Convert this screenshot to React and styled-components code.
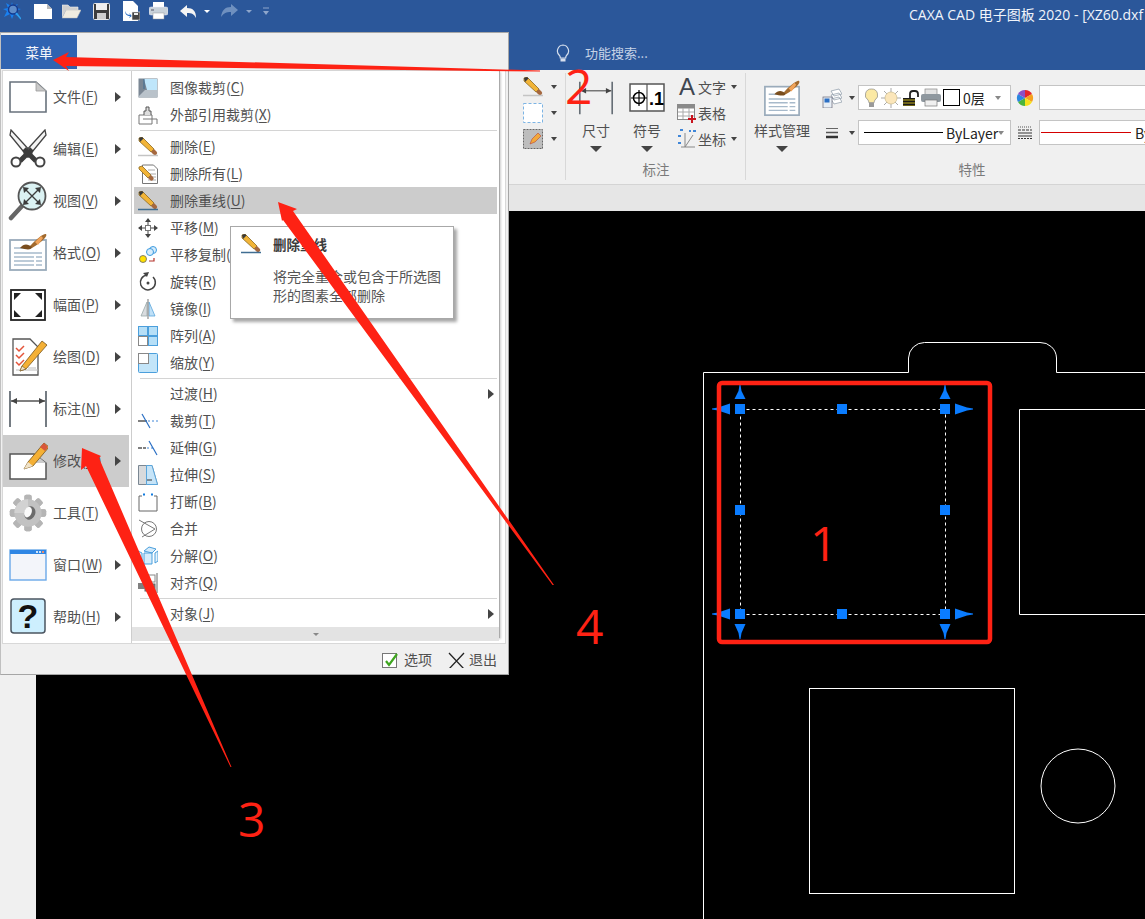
import styled, { createGlobalStyle } from "styled-components";

const GlobalStyle = createGlobalStyle`
  html, body {
    margin: 0;
    padding: 0;
    background: #000;
    overflow: hidden;
  }
  * {
    box-sizing: border-box;
  }
`;

const CJK = `"Noto Sans CJK SC", "Noto Sans", sans-serif`;
const RED = "#fe2214";
const GRIP = "#0a7cff";

const Page = styled.div`
  position: relative;
  width: 1145px;
  height: 919px;
  overflow: hidden;
  display: flex;
  flex-direction: column;
  font-family: ${CJK};
  font-size: 14px;
  color: #505050;
`;

/* ---------- title bar ---------- */
const TitleBar = styled.header`
  height: 70px;
  flex: none;
  background: #2b579a;
  display: flex;
  flex-direction: column;
`;

const TitleRow = styled.div`
  height: 28px;
  display: flex;
  align-items: center;
  white-space: nowrap;
  overflow: hidden;
`;

const QuickBar = styled.div`
  flex: 0 0 909px;
  display: flex;
  align-items: center;
  padding-bottom: 6px;
`;

const QuickSlot = styled.span`
  display: flex;
  margin-left: ${(p) => p.$left}px;
`;

const WindowTitle = styled.span`
  flex: none;
  color: #f0f4fa;
  font-size: 14px;
  font-family: "Open Sans", ${CJK};
`;

const SearchRow = styled.div`
  flex: 1;
  display: flex;
  align-items: flex-end;
  gap: 15px;
  padding: 0 0 8px 556px;
  color: #c6d3e6;
  font-size: 13px;
  line-height: 18px;
`;

/* ---------- ribbon ---------- */
const Ribbon = styled.section`
  height: 115px;
  flex: none;
  display: flex;
  padding-left: 509px;
  background: #f0f0f0;
  border-bottom: 1px solid #d4d4d4;
  overflow: hidden;
`;

const Group = styled.div`
  flex: 0 0 ${(p) => p.$width}px;
  position: relative;
  display: flex;
  flex-direction: column;
  padding-top: 10px;
  &::after {
    content: "";
    position: absolute;
    right: 0;
    top: 3px;
    bottom: 4px;
    width: 1px;
    background: #d8d8d8;
  }
`;

const GroupBody = styled.div`
  height: 77px;
  display: flex;
`;

const GroupLabel = styled.div`
  height: 24px;
  line-height: 24px;
  text-align: center;
  color: #7a7a7a;
  font-size: 13.5px;
`;

const BigButton = styled.div`
  flex: 0 0 ${(p) => p.$width}px;
  display: flex;
  flex-direction: column;
  align-items: center;
  white-space: nowrap;
`;

const BigIcon = styled.div`
  height: 42px;
  display: flex;
  align-items: flex-start;
`;

const BigLabel = styled.div`
  height: 18px;
  line-height: 16px;
`;

const Caret = styled.span`
  flex: none;
  display: block;
  width: 0;
  height: 0;
  margin: ${(p) => p.$margin || "0"};
  border-left: ${(p) => p.$size}px solid transparent;
  border-right: ${(p) => p.$size}px solid transparent;
  border-top: ${(p) => Math.ceil(p.$size * 0.9)}px solid ${(p) => p.$color || "#444"};
`;

const SmallColumn = styled.div`
  display: flex;
  flex-direction: column;
  margin: -5px 0 0 ${(p) => p.$left}px;
`;

const SmallRow = styled.div`
  height: 26px;
  display: flex;
  align-items: center;
  white-space: nowrap;
  padding-bottom: 2px;
`;

const SmallIcon = styled.span`
  flex: 0 0 ${(p) => p.$width}px;
  display: flex;
  justify-content: center;
  align-items: center;
`;

const BigLetter = styled.span`
  font-family: "Liberation Sans", sans-serif;
  font-size: 24px;
  line-height: 24px;
  color: #3f4650;
`;

const PropColumns = styled.div`
  display: flex;
  flex-direction: column;
  gap: 10px;
  margin: 5px 0 0 0;
`;

const PropRow = styled.div`
  height: 25px;
  display: flex;
  align-items: center;
`;

const ComboBox = styled.div`
  flex: 0 0 ${(p) => p.$width}px;
  height: 25px;
  display: flex;
  align-items: center;
  gap: ${(p) => p.$gap || 0}px;
  padding: 0 5px 0 ${(p) => (p.$tight ? 1 : 5)}px;
  background: #fff;
  border: 1px solid #c4c4c4;
  color: #222;
  white-space: nowrap;
  overflow: hidden;
`;

const ComboLine = styled.span`
  flex: 0 0 ${(p) => p.$width}px;
  height: 1px;
  background: ${(p) => p.$color};
`;

const ComboText = styled.span`
  margin-left: ${(p) => p.$left}px;
  font-size: 14px;
  line-height: 18px;
`;

/* ---------- work area ---------- */
const GreyStrip = styled.div`
  height: 26px;
  flex: none;
  background: #e6e6e6;
`;

const WorkArea = styled.main`
  flex: 1;
  display: flex;
  min-height: 0;
`;

const LeftStrip = styled.div`
  flex: 0 0 36px;
  background: #f0f0f0;
`;

const Canvas = styled.div`
  flex: 1;
  background: #000;
`;

const CanvasSvg = styled.svg`
  display: block;
  width: 100%;
  height: 100%;
`;

/* ---------- application menu ---------- */
const Menu = styled.nav`
  position: absolute;
  left: 0;
  top: 32px;
  width: 509px;
  height: 643px;
  z-index: 10;
  display: flex;
  flex-direction: column;
  background: #f0f0f0;
  border: 1px solid #a6a6a6;
  border-left-color: #c0c0c0;
`;

const MenuHeader = styled.div`
  height: 37px;
  flex: none;
  padding-top: 2px;
`;

const MenuTab = styled.div`
  width: 76px;
  height: 34px;
  display: flex;
  align-items: center;
  justify-content: center;
  background: #3063b1;
  color: #f4f6fb;
  font-size: 13.5px;
`;

const MenuPanel = styled.div`
  height: 574px;
  margin: 0 2px 0 1px;
  display: flex;
  background: #fff;
  border: 1px solid #d8d8d8;
`;

const PrimaryList = styled.ul`
  flex: 0 0 129px;
  margin: 0;
  padding: 0 2px 0 0;
  list-style: none;
  border-right: 1px solid #d0d0d0;
`;

const PrimaryRow = styled.li`
  height: 52px;
  display: flex;
  align-items: center;
  background: ${(p) => (p.$active ? "#cccccc" : "transparent")};
`;

const PrimaryIcon = styled.span`
  flex: 0 0 50px;
  padding-left: 5px;
  display: flex;
`;

const RowLabel = styled.span`
  flex: 1;
  white-space: nowrap;
  line-height: 20px;
  padding-bottom: 2px;
  u {
    text-underline-offset: 2px;
  }
`;

const SubMenuArrow = styled.span`
  flex: none;
  width: 0;
  height: 0;
  margin-right: ${(p) => p.$right}px;
  border-top: 5px solid transparent;
  border-bottom: 5px solid transparent;
  border-left: 6px solid #444;
`;

const SecondaryPane = styled.div`
  flex: 0 0 368px;
  height: 567px;
  position: relative;
  display: flex;
  flex-direction: column;
  border-right: 1px solid #aaa;
  border-bottom: 1px solid #aaa;
  box-shadow: 1px 1px 2px rgba(0, 0, 0, 0.2);
`;

const SecondaryList = styled.ul`
  flex: 1;
  margin: 0;
  padding: 3px 2px 0;
  list-style: none;
`;

const SecondaryRow = styled.li`
  height: 27px;
  display: flex;
  align-items: center;
  background: ${(p) => (p.$active ? "#cccccc" : "transparent")};
`;

const SecondaryIcon = styled.span`
  flex: 0 0 36px;
  padding-left: 4px;
  display: flex;
`;

const Separator = styled.li`
  height: 1px;
  margin: 2px 0 ${(p) => p.$after}px 6px;
  background: #d4d4d4;
`;

const ScrollFoot = styled.div`
  height: 14px;
  flex: none;
  display: flex;
  align-items: center;
  justify-content: center;
  background: #e3e3e3;
`;

const MenuFooter = styled.div`
  flex: 1;
  display: flex;
  align-items: center;
  justify-content: flex-end;
  gap: 16px;
  padding-right: 11px;
`;

const FooterButton = styled.span`
  display: flex;
  align-items: center;
  gap: 4px;
  font-size: 14px;
`;

const Tooltip = styled.aside`
  position: absolute;
  left: 98px;
  top: 155px;
  width: 224px;
  height: 93px;
  padding: 6px 10px 0 10px;
  background: #fff;
  border: 1px solid #a8a8a8;
  box-shadow: 3px 3px 3px rgba(0, 0, 0, 0.35);
  z-index: 2;
`;

const TipTitle = styled.div`
  display: flex;
  align-items: center;
  gap: 12px;
  height: 22px;
  font-weight: 700;
  font-size: 13.5px;
  color: #3c3c3c;
`;

const TipBody = styled.p`
  margin: 12px 0 0 32px;
  font-size: 14px;
  line-height: 19px;
  color: #555;
`;

/* ---------- red annotations ---------- */
const Annotations = styled.svg`
  position: absolute;
  left: 0;
  top: 0;
  width: 1145px;
  height: 919px;
  z-index: 20;
  pointer-events: none;
`;

const Number = styled.span`
  position: absolute;
  left: ${(p) => p.$x}px;
  top: ${(p) => p.$y}px;
  z-index: 21;
  color: ${RED};
  font-family: "Open Sans", sans-serif;
  font-weight: 400;
  font-size: 48px;
  line-height: 48px;
`;

/* ---------- drawn icons ---------- */
const Icon = ({ w = 20, h = w, box, children }) => (
  <svg width={w} height={h} viewBox={box || `0 0 ${w} ${h}`} style={{ display: "block", flex: "none" }}>
    {children}
  </svg>
);

const PencilMark = ({ line }) => (
  <>
    <path d="M1 1l3-1 12 12-3 3L1 4z" fill="#f2b437" stroke="#8b6a22" strokeWidth="0.8" />
    <path d="M1 1l3-1 1.5 1.5-3.5 3.5z" fill="#3a3a3a" />
    <path d="M13 15l3-3 2.5 2.5a2 2 0 0 1-3 3z" fill="#a5683f" />
    <path d="M0 18.5h20" stroke={line} strokeWidth="1.5" />
  </>
);

const Erase = ({ line = "#c4c4c4" }) => (
  <Icon>
    <PencilMark line={line} />
  </Icon>
);

const EraseAll = () => (
  <Icon>
    <path d="M4.5 1h11l4 4v14.500h-15z" fill="#fff" stroke="#777" />
    <path d="M10 6h7M12 10h6M12 13h6M10 16h8" stroke="#aaa" />
    <path d="M1 3l3-1 9 9-3 3-9-9z" fill="#f2b437" stroke="#8b6a22" strokeWidth="0.8" />
    <path d="M10 14l3-3 2 2a2 2 0 0 1-3 3z" fill="#a5683f" />
  </Icon>
);

const CropImage = () => (
  <Icon>
    <rect x="0.500" y="0.500" width="19" height="19" fill="#7b8794" />
    <path d="M6 1h13v11H9z" fill="#bfe6fb" />
    <path d="M0 19l7-7h12v7z" fill="#b9c2ca" />
    <path d="M6 1v10" stroke="#3f6d92" />
  </Icon>
);

const CropRef = () => (
  <Icon>
    <path d="M1 10h13v9H1zM5 14h14v5" fill="#fff" stroke="#777" />
    <path d="M6 10V6h2V2h3v4h2v4" fill="#ddd" stroke="#555" />
  </Icon>
);

const MoveIcon = () => (
  <Icon>
    <path d="M10 1v18M1 10h18" stroke="#444" />
    <path d="M10 0l3 4H7zM10 20l-3-4h6zM0 10l4-3v6zM20 10l-4 3V7z" fill="#444" />
    <rect x="7.500" y="7.500" width="5" height="5" fill="#fff" stroke="#777" />
  </Icon>
);

const CopyIcon = () => (
  <Icon>
    <circle cx="5" cy="14" r="3.500" fill="#ffe000" stroke="#666" strokeWidth="0.8" />
    <circle cx="15" cy="5" r="3.500" fill="#d6ecfb" stroke="#3d9be0" />
    <circle cx="12" cy="7" r="3.500" fill="#d6ecfb" stroke="#3d9be0" />
    <path d="M11 16h5v-3" fill="none" stroke="#b3332b" strokeWidth="1.200" />
  </Icon>
);

const RotateIcon = () => (
  <Icon>
    <path d="M9 3a7.500 7.500 0 1 0 6 2" fill="none" stroke="#444" strokeWidth="1.500" />
    <path d="M5 1l6-1-2 5z" fill="#444" />
    <circle cx="10" cy="11" r="1.500" fill="#444" />
  </Icon>
);

const MirrorIcon = () => (
  <Icon>
    <path d="M9 3L3 17h6z" fill="#d9dcdf" stroke="#9aa" strokeWidth="0.8" />
    <path d="M11 3l6 14h-6z" fill="#bfe0f7" stroke="#5aa6dc" strokeWidth="0.8" />
    <path d="M10 0v20" stroke="#8b8b8b" strokeWidth="1.200" />
  </Icon>
);

const ArrayIcon = () => (
  <Icon>
    <rect x="0.500" y="0.500" width="9" height="9" fill="#b6dff7" stroke="#4b9fdc" />
    <rect x="10.500" y="0.500" width="9" height="9" fill="#b6dff7" stroke="#4b9fdc" />
    <rect x="10.500" y="10.500" width="9" height="9" fill="#b6dff7" stroke="#4b9fdc" />
    <rect x="0.500" y="10.500" width="9" height="9" fill="#fff" stroke="#888" />
  </Icon>
);

const ScaleIcon = () => (
  <Icon>
    <rect x="0.500" y="0.500" width="19" height="19" rx="1" fill="#c3e5f9" stroke="#4b9fdc" />
    <rect x="0.500" y="0.500" width="10" height="10" fill="#fff" stroke="#888" />
  </Icon>
);

const TrimIcon = () => (
  <Icon>
    <path d="M0 10h9" stroke="#555" strokeWidth="1.500" />
    <path d="M10 10h10" stroke="#3f86d8" strokeDasharray="2 2" />
    <path d="M4 3l8 14" stroke="#2a6fc4" strokeWidth="1.200" />
  </Icon>
);

const ExtendIcon = () => (
  <Icon>
    <path d="M0 10h8" stroke="#555" strokeWidth="1.500" strokeDasharray="4 1" />
    <path d="M9 10h6" stroke="#3f86d8" strokeDasharray="2 2" />
    <path d="M11 3l8 14" stroke="#2a6fc4" strokeWidth="1.200" />
  </Icon>
);

const StretchIcon = () => (
  <Icon>
    <path d="M0.500 0.500H14l5.500 19H0.500z" fill="#d8dadc" stroke="#7a8793" />
    <path d="M8.500 0.500H14l5.500 19h-11z" fill="#c6e4f8" stroke="#5aa6dc" />
    <path d="M9 15h5" stroke="#333" />
  </Icon>
);

const BreakIcon = () => (
  <Icon>
    <path d="M1 4v15h18V4" fill="none" stroke="#666" />
    <path d="M1 4h3M16 4h3" stroke="#666" />
    <path d="M5 2.500h2M13 2.500h2" stroke="#0f7adf" strokeWidth="2" />
  </Icon>
);

const MergeIcon = () => (
  <Icon>
    <circle cx="11" cy="10" r="7.500" fill="#fff" stroke="#777" />
    <path d="M1 1l16 9-13 8" fill="none" stroke="#777" />
  </Icon>
);

const ExplodeIcon = () => (
  <Icon>
    <path d="M6 5l5-4 7 2-4 4zM6 7h8v11H6z" fill="#d6ecfb" stroke="#4b9fdc" />
    <path d="M0 5l4 2v9l-4-3zM20 5v10l-3 2V7z" fill="#e6f3fc" stroke="#4b9fdc" />
  </Icon>
);

const AlignIcon = () => (
  <Icon>
    <path d="M19 0v20" stroke="#999" strokeWidth="1.500" />
    <rect x="7" y="2" width="10" height="7" fill="#fff" stroke="#888" />
    <rect x="7" y="11" width="10" height="7" fill="#7f7f7f" stroke="#666" />
    <rect x="0" y="10" width="7" height="6" fill="#808080" />
  </Icon>
);

const FileBig = () => (
  <Icon w={40}>
    <path d="M2 5h26l10 9v21H2z" fill="#fff" stroke="#68727c" strokeWidth="1.600" />
    <path d="M28 5v9h10z" fill="#c9c9c9" stroke="#9a9a9a" strokeWidth="0.800" />
  </Icon>
);

const ScissorsBig = () => (
  <Icon w={40}>
    <path d="M3 1L24 24 20 28 2 6z" fill="#f4f4f4" stroke="#444" strokeWidth="1.300" />
    <path d="M37 1L16 24l4 4L38 6z" fill="#f4f4f4" stroke="#444" strokeWidth="1.300" />
    <path d="M24 20l-12 12M16 20l12 12" stroke="#3c3c3c" strokeWidth="5" />
    <circle cx="8" cy="33" r="4.500" fill="#fff" stroke="#444" strokeWidth="2" />
    <circle cx="32" cy="33" r="4.500" fill="#fff" stroke="#444" strokeWidth="2" />
  </Icon>
);

const ViewBig = () => (
  <Icon w={40}>
    <path d="M3 37L14 25" stroke="#666" strokeWidth="4.500" strokeLinecap="round" />
    <circle cx="24" cy="15" r="13.500" fill="#dbf2f3" stroke="#555" strokeWidth="1.800" />
    <path d="M17 8l14 14M31 8L17 22" stroke="#3c3c3c" strokeWidth="1.400" />
    <path d="M15 6l6 1-5 5zM33 6l-1 6-5-5zM15 24l1-6 5 5zM33 24l-6-1 5-5z" fill="#3c3c3c" />
  </Icon>
);

const FormatBig = ({ size = 40 }) => (
  <Icon w={size} box="0 0 40 40">
    <rect x="2" y="7" width="36" height="30" fill="#fff" stroke="#9aabbb" strokeWidth="1.800" />
    <path d="M6 15h12M6 20h28M6 24h20M28 24h6M6 28h20M28 28h6M6 32h20M28 32h6" stroke="#a7bacb" strokeWidth="1.500" />
    <path d="M38 1c2 2-4 8-14 14l-2-2C28 6 36 0 38 1z" fill="#a26a2e" />
    <path d="M12 15c4-5 8-4 12-1 0 3-5 3-12 1z" fill="#7a4e1e" />
    <path d="M27 9l3 3 5-7-2-2z" fill="#f0a35a" />
  </Icon>
);

const FrameBig = () => (
  <Icon w={40}>
    <rect x="3" y="5" width="34" height="30" fill="#fff" stroke="#222" strokeWidth="1.800" />
    <path d="M6 8h7l-7 7zM34 8h-7l7 7zM6 32h7l-7-7zM34 32h-7l7-7z" fill="#222" />
  </Icon>
);

const DrawBig = () => (
  <Icon w={40}>
    <path d="M5 2h17l8 8v28H5z" fill="#fff" stroke="#555" strokeWidth="1.300" />
    <path d="M8 11l3 3 5-5M8 18l3 3 5-5M8 25l3 3 5-5" fill="none" stroke="#e4543a" strokeWidth="1.500" />
    <path d="M20 31h8M8 33h22" stroke="#bbb" />
    <path d="M14 29l20-25 5 4-21 24-6 2z" fill="#f4b035" stroke="#77561d" strokeWidth="0.800" />
    <path d="M12 34l2-5 4 3z" fill="#efe2c8" stroke="#77561d" strokeWidth="0.600" />
  </Icon>
);

const DimBig = ({ size = 40, h = 40 }) => (
  <Icon w={size} h={h} box="0 0 40 40">
    <path d="M2 2v36M38 2v36" stroke="#666e76" strokeWidth="1.800" />
    <path d="M3 12h34" stroke="#555" strokeWidth="1.300" />
    <path d="M3 12l6-3v6zM37 12l-6-3v6z" fill="#444" />
  </Icon>
);

const ModifyBig = () => (
  <Icon w={40}>
    <path d="M2 13h24l12 9v16H2z" fill="#fff" stroke="#555" strokeWidth="1.500" />
    <path d="M28 14v8h10z" fill="#ccc" />
    <path d="M20 21l16-19 5 4-16 19-9 3z" fill="#f4b035" stroke="#77561d" strokeWidth="0.800" />
    <path d="M20 21l5 4-9 3z" fill="#efe2c8" />
    <path d="M32 6l5 4 3-4-4-4z" fill="#d8563a" />
  </Icon>
);

const GearBig = () => (
  <Icon w={40} box="-2 -2 44 44">
    <g fill="#b5b5b5">
      {[0, 45, 90, 135, 180, 225, 270, 315].map((deg) => (
        <rect key={deg} x="16" y="0" width="8" height="40" rx="2" transform={`rotate(${deg} 20 20)`} />
      ))}
    </g>
    <circle cx="20" cy="20" r="15" fill="#c2c2c2" />
    <path d="M5 20a15 15 0 0 1 15-15v15z" fill="#d2d2d2" />
    <ellipse cx="22" cy="20" rx="6" ry="7.500" fill="#6b6b6b" transform="rotate(20 22 20)" />
    <ellipse cx="20" cy="19" rx="4" ry="6" fill="#fafafa" transform="rotate(20 20 19)" />
  </Icon>
);

const WindowBig = () => (
  <Icon w={40}>
    <rect x="2" y="5" width="36" height="30" fill="#f3f5fa" stroke="#6aa9e8" strokeWidth="1.400" />
    <rect x="2" y="5" width="36" height="4" fill="#2f86e4" />
    <path d="M28 6h2v2h-2zM31 6h2v2h-2z" fill="#cde4fa" />
    <path d="M34 6h2v2h-2z" fill="#e58b72" />
  </Icon>
);

const HelpBig = () => (
  <Icon w={40}>
    <rect x="3" y="2" width="34" height="34" rx="3" fill="#cdeffe" stroke="#4b5560" strokeWidth="1.500" />
    <text x="20" y="31" textAnchor="middle" fontFamily="Liberation Sans" fontWeight="700" fontSize="34" fill="#111">?</text>
  </Icon>
);

const LEFT_ITEMS = [
  ["文件", "F", FileBig],
  ["编辑", "E", ScissorsBig],
  ["视图", "V", ViewBig],
  ["格式", "O", FormatBig],
  ["幅面", "P", FrameBig],
  ["绘图", "D", DrawBig],
  ["标注", "N", DimBig],
  ["修改", "M", ModifyBig, true],
  ["工具", "T", GearBig],
  ["窗口", "W", WindowBig],
  ["帮助", "H", HelpBig],
];

const ITEMS_TOP = [
  ["图像裁剪", "C", <CropImage />],
  ["外部引用裁剪", "X", <CropRef />],
  { sep: 2 },
  ["删除", "E", <Erase />],
  ["删除所有", "L", <EraseAll />],
  ["删除重线", "U", <Erase line="#3f6d92" />, "active"],
  ["平移", "M", <MoveIcon />],
  ["平移复制", "C", <CopyIcon />],
  ["旋转", "R", <RotateIcon />],
  ["镜像", "I", <MirrorIcon />],
  ["阵列", "A", <ArrayIcon />],
  ["缩放", "Y", <ScaleIcon />],
  { sep: 1 },
  ["过渡", "H", null, "sub"],
  ["裁剪", "T", <TrimIcon />],
  ["延伸", "G", <ExtendIcon />],
  ["拉伸", "S", <StretchIcon />],
  ["打断", "B", <BreakIcon />],
  ["合并", "", <MergeIcon />],
  ["分解", "O", <ExplodeIcon />],
  ["对齐", "Q", <AlignIcon />],
  { sep: 1 },
  ["对象", "J", null, "sub"],
];

const Label = ({ text, hotkey }) => (
  <RowLabel>
    {text}
    {hotkey && (
      <>
        (<u>{hotkey}</u>)
      </>
    )}
  </RowLabel>
);

const GRIPS = [
  [740, 409],
  [842, 409],
  [945, 409],
  [740, 510],
  [945, 510],
  [740, 614],
  [842, 614],
  [945, 614],
];

const HANDLES = [
  [740, 409],
  [945, 409],
  [740, 614],
  [945, 614],
];

// grip arrows: base 10px off the grip, tip further out, turned per corner
const Barb = ({ x, y, deg, tip }) => (
  <path
    d={`M10 -5.500L${tip - 6} -1.500L${tip} -0.500V0.500L${tip - 6} 1.500L10 5.500z`}
    fill={GRIP}
    transform={`translate(${x} ${y}) rotate(${deg})`}
  />
);

const Drawing = () => (
  <CanvasSvg viewBox="36 211 1109 708">
    <g fill="none" stroke="#fff">
      <path d="M703.500 919V372.500H908.500V358a16 16 0 0 1 16-15.500H1040a16 16 0 0 1 16.500 15.500V372.500H1145" />
      <path d="M1145 409.500H1019.500V614.500H1145" />
      <rect x="809.500" y="688.500" width="205" height="205" />
      <circle cx="1078" cy="786" r="37" />
      <rect x="740.500" y="409.500" width="205" height="205" strokeDasharray="3 3" />
    </g>
    {HANDLES.map(([x, y]) => (
      <g key={`${x}-${y}`}>
        <Barb x={x} y={y} deg={y < 500 ? -90 : 90} tip={y < 500 ? 24 : 25} />
        <Barb x={x} y={y} deg={x < 800 ? 180 : 0} tip={28} />
      </g>
    ))}
    {GRIPS.map(([x, y]) => (
      <rect key={`${x}-${y}`} x={x - 5} y={y - 5} width="10" height="10" fill={GRIP} />
    ))}
    <rect x="719" y="383" width="271" height="259" rx="3" fill="none" stroke={RED} strokeWidth="4.500" />
  </CanvasSvg>
);

function App() {
  return (
    <Page>
      <GlobalStyle />
      <TitleBar>
        <TitleRow>
          <QuickBar>
            <QuickSlot $left={3}>
              <Icon w={18}>
                <path d="M9 0l1 4 5-2-3 4 6 1-5 2 4 6-6-3-2 5-2-5-6 3 3-6-4-2 5-1-2-5 5 3z" fill="#1a80f0" />
                <circle cx="10" cy="7.500" r="4.500" fill="#5f8cc8" stroke="#12398f" strokeWidth="1.500" />
                <path d="M13 11l5 6" stroke="#2ea0ee" strokeWidth="1.500" />
              </Icon>
            </QuickSlot>
            <QuickSlot $left={13}>
              <Icon w={18}>
                <path d="M0 2h13l5 5v10H0z" fill="#fff" />
                <path d="M13 2v5h5z" fill="#b9b9b9" />
              </Icon>
            </QuickSlot>
            <QuickSlot $left={10}>
              <Icon w={19}>
                <path d="M0 3h6l2 2h8v3H4L0 15z" fill="#cfcfcf" stroke="#eee" strokeWidth="0.600" />
                <path d="M4 8h15l-4 8H0z" fill="#f0ece0" stroke="#bbb" strokeWidth="0.500" />
              </Icon>
            </QuickSlot>
            <QuickSlot $left={12}>
              <Icon w={17} h={20}>
                <rect x="0.500" y="2.500" width="16" height="16" rx="1" fill="#3d3d3d" stroke="#e8e8e8" />
                <rect x="3" y="3" width="11" height="6" fill="#efefef" />
                <rect x="4" y="12" width="9" height="6" fill="#cfcfcf" />
              </Icon>
            </QuickSlot>
            <QuickSlot $left={12}>
              <Icon w={18} h={20}>
                <path d="M1 0h10l5 5v15H1z" fill="#fff" />
                <path d="M3 10c1 3 3 4 5 4l-1-2 3 3-3 2 1-2c-3 0-5-2-5-5z" fill="#2b6fc4" />
                <rect x="10" y="11" width="8" height="8" fill="#444" stroke="#eee" strokeWidth="0.600" />
                <rect x="12" y="12" width="4" height="2" fill="#eee" />
              </Icon>
            </QuickSlot>
            <QuickSlot $left={9}>
              <Icon w={19} h={20}>
                <rect x="4" y="1" width="11" height="6" fill="#fff" />
                <rect x="0" y="6" width="19" height="8" rx="2" fill="#c9d2da" stroke="#eef" strokeWidth="0.500" />
                <rect x="4" y="12" width="11" height="6" fill="#fff" stroke="#999" strokeWidth="0.500" />
                <path d="M2 9h3" stroke="#556" />
              </Icon>
            </QuickSlot>
            <QuickSlot $left={12}>
              <Icon w={17}>
                <path d="M7 5c6 0 9 3 9 10-2-4-4-5-9-5v4L0 8l7-6z" fill="#f4f4f4" />
              </Icon>
            </QuickSlot>
            <QuickSlot $left={7}>
              <Caret $size={3} $color="#fff" />
            </QuickSlot>
            <QuickSlot $left={10}>
              <Icon w={18}>
                <path d="M11 5C5 5 2 8 1 15c3-4 5-5 10-5v4l7-6-7-6z" fill="#6f90bf" />
              </Icon>
            </QuickSlot>
            <QuickSlot $left={8}>
              <Caret $size={3} $color="#8ea6cb" />
            </QuickSlot>
            <QuickSlot $left={11}>
              <Icon w={6} h={9}>
                <path d="M0 1h6" stroke="#8ea6cb" />
                <path d="M0 4h6L3 8z" fill="#8ea6cb" />
              </Icon>
            </QuickSlot>
          </QuickBar>
          <WindowTitle>CAXA CAD 电子图板 2020 - [XZ60.dxf</WindowTitle>
        </TitleRow>
        <SearchRow>
          <Icon w={14} h={18}>
            <path d="M7 1a6 6 0 0 0-3.500 10.500c.5.500.8 1.500.8 2.500h5.400c0-1 .3-2 .8-2.500A6 6 0 0 0 7 1z" fill="none" stroke="#d7e0ee" strokeWidth="1.200" />
            <rect x="4.500" y="14.500" width="5" height="3" fill="#d7e0ee" />
          </Icon>
          <span>功能搜索...</span>
        </SearchRow>
      </TitleBar>

      <Ribbon>
        <Group $width={57}>
          <GroupBody>
            <SmallColumn $left={13}>
              <SmallRow>
                <SmallIcon $width={22}>
                  <Erase />
                </SmallIcon>
                <Caret $size={3.500} $margin="0 0 0 7px" />
              </SmallRow>
              <SmallRow>
                <SmallIcon $width={22}>
                  <Icon>
                    <rect x="0.500" y="0.500" width="19" height="19" fill="#fff" stroke="#7cb4e4" strokeDasharray="3 2" />
                  </Icon>
                </SmallIcon>
                <Caret $size={3.500} $margin="0 0 0 7px" />
              </SmallRow>
              <SmallRow>
                <SmallIcon $width={22}>
                  <Icon>
                    <rect x="0.500" y="0.500" width="19" height="19" fill="#bdbdbd" stroke="#666" strokeDasharray="2 1" />
                    <path d="M7 15l2-5 6-6 3 3-6 6z" fill="#f2a83a" stroke="#b3332b" strokeWidth="0.500" />
                  </Icon>
                </SmallIcon>
                <Caret $size={3.500} $margin="0 0 0 7px" />
              </SmallRow>
            </SmallColumn>
          </GroupBody>
          <GroupLabel />
        </Group>

        <Group $width={180}>
          <GroupBody>
            <BigButton $width={60}>
              <BigIcon>
                <DimBig size={38} h={36} />
              </BigIcon>
              <BigLabel>尺寸</BigLabel>
              <Caret $size={6} $margin="6px 0 0" />
            </BigButton>
            <BigButton $width={42}>
              <BigIcon>
                <Icon w={36} h={36}>
                  <rect x="1" y="4" width="34" height="27" fill="#fff" stroke="#555" strokeWidth="1.500" />
                  <path d="M18 4v27" stroke="#555" strokeWidth="1.200" />
                  <circle cx="10" cy="18" r="5.500" fill="none" stroke="#000" strokeWidth="1.500" />
                  <path d="M2 18h16M10 10v16" stroke="#000" strokeWidth="1.200" />
                  <text x="20" y="25" fontFamily="Liberation Sans" fontWeight="700" fontSize="18" fill="#000">.1</text>
                </Icon>
              </BigIcon>
              <BigLabel>符号</BigLabel>
              <Caret $size={6} $margin="6px 0 0" />
            </BigButton>
            <SmallColumn $left={8}>
              <SmallRow>
                <SmallIcon $width={22}>
                  <BigLetter>A</BigLetter>
                </SmallIcon>
                <span>文字</span>
                <Caret $size={3.500} $margin="0 0 0 5px" />
              </SmallRow>
              <SmallRow>
                <SmallIcon $width={22}>
                  <Icon>
                    <rect x="0.500" y="1.500" width="17" height="15" fill="#fff" stroke="#8a8a8a" />
                    <rect x="0.500" y="1.500" width="17" height="4" fill="#8a8a8a" />
                    <path d="M6 5v11M12 5v11M1 9h16M1 13h16" stroke="#aaa" />
                    <path d="M15 12v8M11 16h8" stroke="#c8141e" strokeWidth="2" />
                  </Icon>
                </SmallIcon>
                <span>表格</span>
              </SmallRow>
              <SmallRow>
                <SmallIcon $width={22}>
                  <Icon>
                    <path d="M4 18h14M8 18L16 6M8 4v14" stroke="#888" fill="none" />
                    <path d="M3 1h3M16 2h3M1 7h3M1 14h3M12 2h2" stroke="#3f86d8" strokeWidth="2" />
                  </Icon>
                </SmallIcon>
                <span>坐标</span>
                <Caret $size={3.500} $margin="0 0 0 5px" />
              </SmallRow>
            </SmallColumn>
          </GroupBody>
          <GroupLabel>标注</GroupLabel>
        </Group>

        <Group $width={452}>
          <GroupBody>
            <BigButton $width={72}>
              <BigIcon>
                <FormatBig size={38} />
              </BigIcon>
              <BigLabel>样式管理</BigLabel>
              <Caret $size={6} $margin="6px 0 0" />
            </BigButton>
            <PropColumns>
              <PropRow>
                <SmallIcon $width={28}>
                  <Icon>
                    <path d="M9 3l8-2 3 5-8 2zM9 7l8-2 3 5-8 2zM9 11l8-2 3 5-8 2z" fill="#fff" stroke="#8a98a6" strokeWidth="0.700" />
                    <rect x="1" y="9" width="9" height="11" fill="#e8eef5" stroke="#667" strokeWidth="0.700" />
                    <rect x="2.500" y="10.500" width="5" height="4" fill="#2b6fc4" />
                  </Icon>
                </SmallIcon>
                <Caret $size={3.500} $margin="0 3px 0 3px" />
                <ComboBox $width={153} $gap={2}>
                  <Icon w={15} h={20}>
                    <path d="M7.500 1a6 6 0 0 0-3.500 11c.5.500.8 1.500.8 2.500h5.400c0-1 .3-2 .8-2.500A6 6 0 0 0 7.500 1z" fill="#fbe9a4" stroke="#888" strokeWidth="0.700" />
                    <rect x="5" y="15" width="5" height="4" fill="#9a9a9a" />
                  </Icon>
                  <Icon w={20} box="0 0 20 20">
                    <path d="M10 0v4M10 16v4M0 10h4M16 10h4M3 3l3 3M14 14l3 3M17 3l-3 3M6 14l-3 3" stroke="#a9a9a9" />
                    <circle cx="10" cy="10" r="6" fill="#fbe6ba" stroke="#c9b98a" strokeWidth="0.700" />
                  </Icon>
                  <Icon w={16}>
                    <path d="M7 9V4a3 3 0 0 1 3-3h2a3 3 0 0 1 3 3v3" fill="none" stroke="#222" strokeWidth="1.800" />
                    <rect x="0" y="8" width="12" height="9" fill="#191919" />
                    <path d="M0 10h12M0 13h12M0 16h12" stroke="#c6b11a" />
                  </Icon>
                  <Icon w={20}>
                    <rect x="4" y="1" width="12" height="6" fill="#e4e4e4" stroke="#888" strokeWidth="0.700" />
                    <rect x="0" y="6" width="20" height="8" rx="2" fill="#8f989f" />
                    <rect x="4" y="12" width="12" height="6" fill="#f0f0f0" stroke="#777" strokeWidth="0.700" />
                  </Icon>
                  <Icon w={17} h={17}>
                    <rect x="0.500" y="0.500" width="16" height="16" fill="#fff" stroke="#000" />
                  </Icon>
                  <ComboText $left={1}>0层</ComboText>
                  <Caret $size={3.500} $color="#888" $margin="0 4px 0 auto" />
                </ComboBox>
                <SmallIcon $width={28}>
                  <Icon w={18} h={18}>
                    <path d="M9 9V1a8 8 0 0 1 7 4z" fill="#e5252a" />
                    <path d="M9 9l7-4a8 8 0 0 1 0 8z" fill="#f4a21e" />
                    <path d="M9 9l7 4a8 8 0 0 1-7 4z" fill="#f7e11c" />
                    <path d="M9 9v8a8 8 0 0 1-7-4z" fill="#4bb43c" />
                    <path d="M9 9l-7 4a8 8 0 0 1 0-8z" fill="#2a86e0" />
                    <path d="M9 9L2 5a8 8 0 0 1 7-4z" fill="#8c4fc4" />
                  </Icon>
                </SmallIcon>
                <ComboBox $width={140} />
              </PropRow>
              <PropRow>
                <SmallIcon $width={28}>
                  <Icon w={14} h={12}>
                    <path d="M1 1.500h12" stroke="#666" />
                    <path d="M1 5.500h12" stroke="#555" strokeWidth="1.500" />
                    <path d="M1 10h12" stroke="#333" strokeWidth="2.500" />
                  </Icon>
                </SmallIcon>
                <Caret $size={3.500} $margin="0 3px 0 3px" />
                <ComboBox $width={153}>
                  <ComboLine $width={79} $color="#000" />
                  <ComboText $left={3}>ByLayer</ComboText>
                  <Caret $size={3.500} $color="#888" $margin="0 4px 0 auto" />
                </ComboBox>
                <SmallIcon $width={28}>
                  <Icon w={14} h={13}>
                    <path d="M0 1h14" stroke="#555" strokeDasharray="1 1" />
                    <path d="M0 4h14" stroke="#333" strokeDasharray="3 1" />
                    <path d="M0 7h14" stroke="#333" />
                    <path d="M0 10h14" stroke="#333" />
                    <path d="M0 12.500h14" stroke="#333" strokeDasharray="2 1" />
                  </Icon>
                </SmallIcon>
                <ComboBox $width={140} $tight>
                  <ComboLine $width={90} $color="#d40000" />
                  <ComboText $left={4}>By</ComboText>
                </ComboBox>
              </PropRow>
            </PropColumns>
          </GroupBody>
          <GroupLabel>特性</GroupLabel>
        </Group>
      </Ribbon>

      <GreyStrip />

      <WorkArea>
        <LeftStrip />
        <Canvas>
          <Drawing />
        </Canvas>
      </WorkArea>

      <Menu>
        <MenuHeader>
          <MenuTab>菜单</MenuTab>
        </MenuHeader>
        <MenuPanel>
          <PrimaryList>
            {LEFT_ITEMS.map(([text, key, Glyph, active]) => (
              <PrimaryRow key={text} $active={active}>
                <PrimaryIcon>
                  <Glyph />
                </PrimaryIcon>
                <Label text={text} hotkey={key} />
                <SubMenuArrow $right={8} />
              </PrimaryRow>
            ))}
          </PrimaryList>
          <SecondaryPane>
            <SecondaryList>
              {ITEMS_TOP.map((item, i) =>
                item.sep ? (
                  <Separator key={i} $after={item.sep} />
                ) : (
                  <SecondaryRow key={item[0]} $active={item[3] === "active"}>
                    <SecondaryIcon>{item[2]}</SecondaryIcon>
                    <Label text={item[0]} hotkey={item[1]} />
                    {item[3] === "sub" && <SubMenuArrow $right={3} />}
                  </SecondaryRow>
                )
              )}
            </SecondaryList>
            <ScrollFoot>
              <Caret $size={3} $color="#888" />
            </ScrollFoot>
            <Tooltip>
              <TipTitle>
                <Erase line="#3f6d92" />
                <span>删除重线</span>
              </TipTitle>
              <TipBody>
                将完全重合或包含于所选图
                <br />
                形的图素全部删除
              </TipBody>
            </Tooltip>
          </SecondaryPane>
        </MenuPanel>
        <MenuFooter>
          <FooterButton>
            <Icon w={18}>
              <rect x="0.500" y="3.500" width="14" height="14" fill="#fff" stroke="#777" />
              <path d="M4 11l3 4 8-11" fill="none" stroke="#3ea51f" strokeWidth="2.200" />
            </Icon>
            选项
          </FooterButton>
          <FooterButton>
            <Icon w={17}>
              <path d="M1 2l15 16M16 2L1 18" stroke="#222" strokeWidth="1.300" />
            </Icon>
            退出
          </FooterButton>
        </MenuFooter>
      </Menu>

      <Annotations viewBox="0 0 1145 919">
        <g fill={RED}>
          <path d="M53 60L69 52 66 57 540 70.500 540 71.500 66 66 69 71z" />
          <path d="M82 448L101 456 99 458 231.500 767 230.500 767 86 466 81 470z" />
          <path d="M278 202L297 209 293 211 554 585 552.500 585 283 220 282 221z" />
        </g>
      </Annotations>
      <Number $x={565} $y={62}>2</Number>
      <Number $x={238} $y={795}>3</Number>
      <Number $x={576} $y={602}>4</Number>
      <Number $x={810} $y={519}>1</Number>
    </Page>
  );
}

export default App;
